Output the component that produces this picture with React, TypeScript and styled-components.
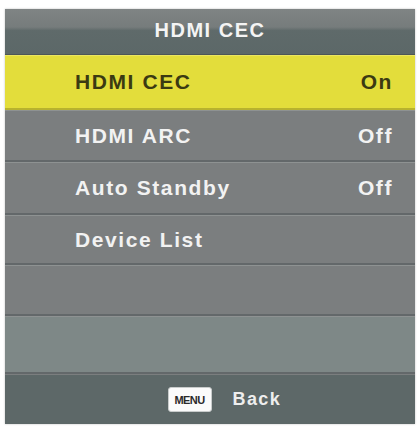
import React from 'react';
import styled, { createGlobalStyle } from 'styled-components';

const GlobalStyle = createGlobalStyle`
  html, body {
    margin: 0;
    padding: 0;
    background: #ffffff;
  }
  body {
    font-family: "Liberation Sans", Arial, sans-serif;
  }
`;

const Page = styled.div`
  width: 420px;
  height: 426px;
  padding: 9px 5px 2px 5px;
  box-sizing: border-box;
`;

const Panel = styled.div`
  width: 410px;
  height: 415px;
  display: flex;
  flex-direction: column;
  background: #7b7e7f;
  box-shadow: 0 0 2px rgba(0, 0, 0, 0.25);
`;

const Header = styled.div`
  height: 46px;
  flex-shrink: 0;
  display: flex;
  align-items: center;
  justify-content: center;
  padding-bottom: 2px;
  box-sizing: border-box;
  background: linear-gradient(to bottom, #7f8484 0%, #767c7c 40%, #5f6a6a 48%, #5c6868 100%);
  color: #f4f4f4;
  font-weight: bold;
  font-size: 20px;
  letter-spacing: 1.5px;
  border-bottom: 1px solid #4d5656;
`;

const List = styled.div`
  flex: 1;
  display: flex;
  flex-direction: column;
`;

const Row = styled.div<{ $active?: boolean; $h: number; $tint?: boolean }>`
  height: ${({ $h }) => $h}px;
  flex-shrink: 0;
  box-sizing: border-box;
  display: flex;
  align-items: center;
  justify-content: space-between;
  padding: 0 22px 0 70px;
  font-weight: bold;
  font-size: 21px;
  letter-spacing: 1.6px;
  color: ${({ $active }) => ($active ? '#3b3a12' : '#f2f2f2')};
  background: ${({ $active, $tint }) =>
    $active ? '#e3dd3b' : $tint ? '#7e8887' : '#7b7e7f'};
  border-top: 1px solid ${({ $active }) => ($active ? '#ece660' : '#8e9292')};
  border-bottom: 2px solid ${({ $active }) => ($active ? '#b8b22e' : '#63686a')};
`;

const Footer = styled.div`
  height: 49px;
  flex-shrink: 0;
  display: flex;
  align-items: center;
  justify-content: center;
  gap: 21px;
  padding-left: 36px;
  background: #5d6868;
`;

const MenuKey = styled.span`
  width: 44px;
  height: 25px;
  box-sizing: border-box;
  display: flex;
  align-items: center;
  justify-content: center;
  background: #fbfbfb;
  border: 1px solid #c9cccc;
  border-radius: 3px;
  color: #2a2a2a;
  font-family: "Liberation Sans Narrow", "Liberation Sans", Arial, sans-serif;
  font-size: 11px;
  font-weight: bold;
  letter-spacing: -0.6px;
`;

const BackLabel = styled.span`
  color: #eeeeee;
  font-weight: bold;
  font-size: 18px;
  letter-spacing: 1.4px;
  width: 56px;
`;

const rows = [
  { label: 'HDMI CEC', value: 'On', h: 55, active: true },
  { label: 'HDMI ARC', value: 'Off', h: 52 },
  { label: 'Auto Standby', value: 'Off', h: 53 },
  { label: 'Device List', value: '', h: 50 },
  { label: '', value: '', h: 51 },
  { label: '', value: '', h: 58, tint: true },
];

export default function App() {
  return (
    <>
      <GlobalStyle />
      <Page>
        <Panel>
          <Header>HDMI CEC</Header>
          <List>
            {rows.map((r, i) => (
              <Row key={i} $active={r.active} $h={r.h} $tint={r.tint}>
                <span>{r.label}</span>
                <span>{r.value}</span>
              </Row>
            ))}
          </List>
          <Footer>
            <MenuKey>MENU</MenuKey>
            <BackLabel>Back</BackLabel>
          </Footer>
        </Panel>
      </Page>
    </>
  );
}
